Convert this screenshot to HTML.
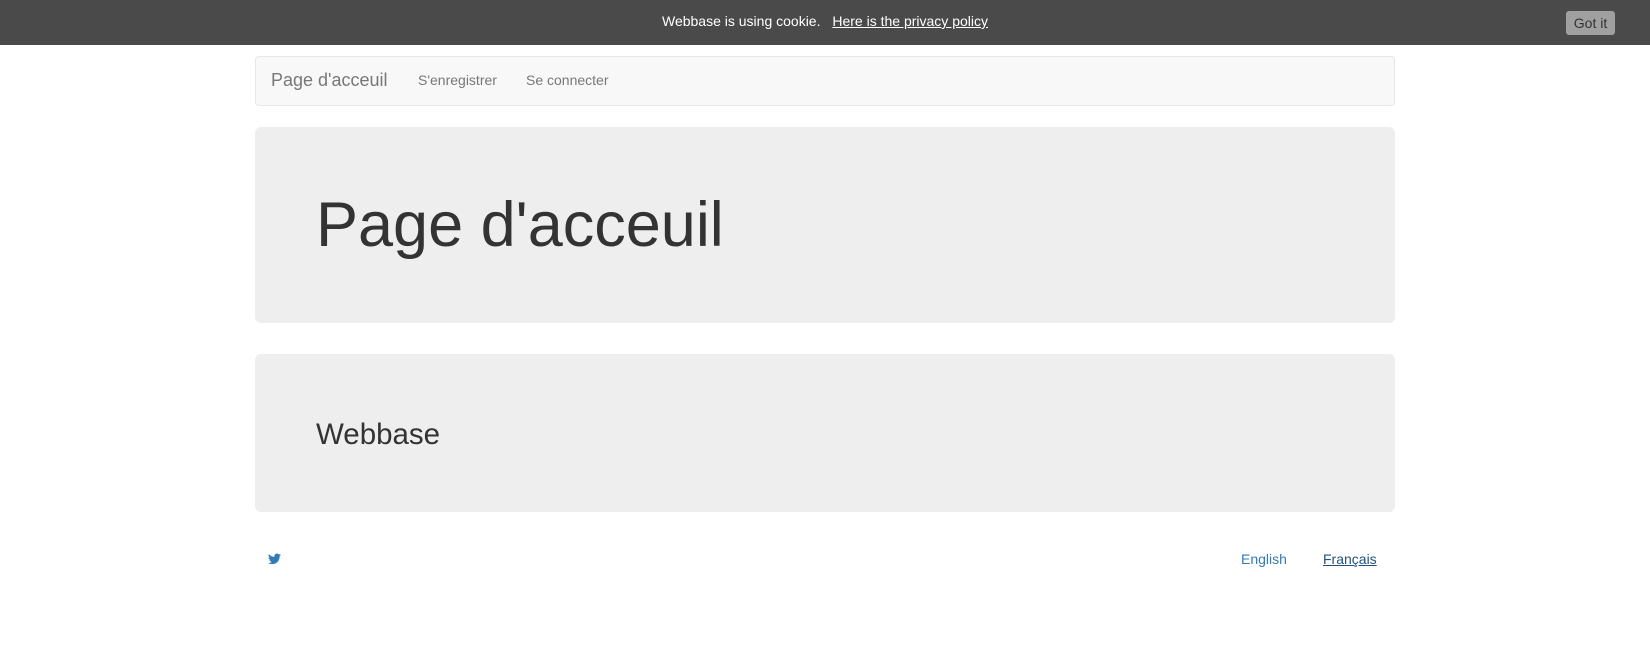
<!DOCTYPE html>
<html><head><meta charset="utf-8"><style>
*{box-sizing:border-box;margin:0;padding:0}
body{width:1650px;height:646px;background:#fff;font-family:"Liberation Sans",Arial,sans-serif;font-size:14px;color:#333;position:relative;overflow:hidden}
.cookie{position:absolute;left:0;top:0;width:1650px;height:45px;background:#4a4a4a;color:#fff;text-align:center;line-height:43px;font-size:14px}
.cookie a{color:#fff;text-decoration:underline;margin-left:8px}
.btn{position:absolute;left:1566px;top:11px;width:49px;height:24px;background:#a0a0a0;border-radius:3px;color:#333;font-size:14px;line-height:24px;text-align:center}
.nav{position:absolute;left:255px;top:56px;width:1140px;height:50px;background:#f8f8f8;border:1px solid #e7e7e7;border-radius:4px}
.nav span{position:absolute;top:0;line-height:46px;color:#777}
.jum{position:absolute;left:255px;width:1140px;background:#eee;border-radius:6px}
h1{position:absolute;left:61px;font-weight:normal;font-size:63px;line-height:1;color:#333}
h2{position:absolute;left:61px;font-weight:normal;font-size:29.5px;line-height:1;color:#333}
.f{position:absolute;top:549px;font-size:14px;color:#337ab7;line-height:20px}
</style></head><body>
<div class="cookie">Webbase is using cookie. <a>Here is the privacy policy</a></div>
<div class="btn">Got it</div>
<div class="nav"><span style="left:15px;font-size:18px">Page d'acceuil</span><span style="left:162px">S'enregistrer</span><span style="left:270px">Se connecter</span></div>
<div class="jum" style="top:127px;height:196px"><h1 style="top:67px">Page d'acceuil</h1></div>
<div class="jum" style="top:354px;height:158px"><h2 style="top:66px">Webbase</h2></div>
<svg style="position:absolute;left:268px;top:553px" width="13" height="12" viewBox="0 0 24 20"><path fill="#337ab7" d="M24 2.4a10 10 0 0 1-2.8.8A5 5 0 0 0 23.3.4a10 10 0 0 1-3.1 1.2A4.9 4.9 0 0 0 11.8 6 14 14 0 0 1 1.7.9a4.9 4.9 0 0 0 1.5 6.6A4.9 4.9 0 0 1 1 6.9a4.9 4.9 0 0 0 3.9 4.9 5 5 0 0 1-2.2.1 4.9 4.9 0 0 0 4.6 3.4A10 10 0 0 1 0 17.3 14 14 0 0 0 7.5 19.5c9 0 14-7.5 14-14v-.6A10 10 0 0 0 24 2.4z"/></svg>
<div class="f" style="left:1241px">English</div>
<div class="f" style="left:1323px;color:#23527c;text-decoration:underline">Français</div>
</body></html>
